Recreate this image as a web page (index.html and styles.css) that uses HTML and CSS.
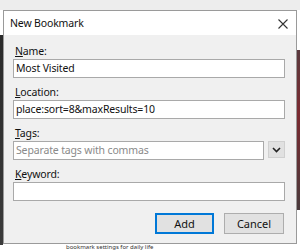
FILE: index.html
```html
<!DOCTYPE html>
<html lang="en">
<head>
	<meta charset="UTF-8">
	<title>New Bookmark</title>
	<link rel="stylesheet" href="styles.css">
</head>
<body>
	<div class="desk">
		<div class="dialog">
			<div class="titlebar">
				<span class="title">New Bookmark</span>
				<svg class="close" width="10" height="10" viewBox="0 0 10 10"><path d="M0.5 0.5L9.5 9.5M9.5 0.5L0.5 9.5" stroke="#333" stroke-width="1.1" fill="none"/></svg>
			</div>
			<div class="panel">
				<div class="field">
					<label><u>N</u>ame:</label>
					<div class="input">Most Visited</div>
				</div>
				<div class="field">
					<label><u>L</u>ocation:</label>
					<div class="input">place:sort=8&amp;maxResults=10</div>
				</div>
				<div class="field">
					<label><u>T</u>ags:</label>
					<div class="row">
						<div class="input hint">Separate tags with commas</div>
						<div class="drop"><svg width="9" height="6" viewBox="0 0 9 6"><path d="M1 1L4.5 4.5L8 1" stroke="#222" stroke-width="1.6" fill="none"/></svg></div>
					</div>
				</div>
				<div class="field">
					<label><u>K</u>eyword:</label>
					<div class="input"></div>
				</div>
				<div class="buttons">
					<button class="btn default">Add</button>
					<button class="btn">Cancel</button>
				</div>
			</div>
		</div>
		<p class="pagetext">bookmark settings for daily life</p>
	</div>
</body>
</html>
```

FILE: styles.css
```css
body,p,label{margin: 0;padding: 0;}
body{font-family: "Noto Sans","Open Sans",sans-serif;font-size: 10.5px;letter-spacing: -0.15px;color: #000;background: #fff;}

.desk{width: 300px;height: 250px;overflow: hidden;padding-top: 10px;box-sizing: border-box;
	background:
		linear-gradient(#ededed,#ededed) 0 0/300px 10px no-repeat,
		linear-gradient(#2a2a2a,#3b3b3b) 0 35px/3px 210px no-repeat,
		linear-gradient(#5a3a3e,#7a2a30 40%,#4a3a3c) 297px 50px/3px 160px no-repeat,
		#fff;}

.dialog{width: 294px;height: 234px;margin-left: 3px;border: 1px solid #9a9a9a;box-sizing: border-box;background: #f0f0f0;display: flex;flex-direction: column;}
.titlebar{height: 24px;background: #fff;display: flex;align-items: center;justify-content: space-between;padding: 0 8px 0 6px;flex-shrink: 0;}
.title{color: #111;}
.close{margin-top: 1px;}

.panel{flex: 1;padding: 8px 11px 0 9px;display: flex;flex-direction: column;}
.field{display: flex;flex-direction: column;margin-bottom: 6px;}
.field label{height: 16px;line-height: 16px;padding-left: 2px;color: #111;}
.field u{text-decoration-thickness: 1px;text-underline-offset: 1px;}
.input{height: 19px;box-sizing: border-box;border: 1px solid #a9a9a9;background: #fff;line-height: 17px;padding-left: 2px;color: #111;white-space: nowrap;overflow: hidden;}
.input.hint{color: #8a8a8a;}
.row{display: flex;gap: 4px;}
.row .input{flex: 1;}
.drop{width: 17px;height: 17px;box-sizing: border-box;background: #e1e1e1;border: 1px solid #d0d0d0;display: flex;align-items: center;justify-content: center;}

.buttons{display: flex;justify-content: flex-end;gap: 10px;margin-top: 6px;padding-right: 1px;}
.btn{font: inherit;font-size: 11px;height: 21px;width: 60px;box-sizing: border-box;background: #e1e1e1;border: 1px solid #adadad;color: #111;padding: 0;}
.btn.default{width: 59px;border: 2px solid #0078d7;}

.pagetext{padding-left: 66px;font-size: 6px;letter-spacing: 0;color: #333;line-height: 6px;}
```
